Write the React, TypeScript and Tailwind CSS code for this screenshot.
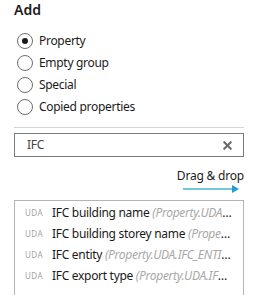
import { X } from "lucide-react";

const font = { fontFamily: '"Segoe UI", "Noto Sans", sans-serif' };

type Item = { name: string; path: string };

const items: Item[] = [
  { name: "IFC building name", path: "Property.UDA.IFC_BUILDING_NAME" },
  { name: "IFC building storey name", path: "Property.UDA.IFC_BUILDING_STOREY" },
  { name: "IFC entity", path: "Property.UDA.IFC_ENTITY" },
  { name: "IFC export type", path: "Property.UDA.IFC_EXPORT_TYPE" },
];

const options = ["Property", "Empty group", "Special", "Copied properties"];

const Radio = ({ checked }: { checked?: boolean }) => (
  <span className="flex h-[16px] w-[16px] shrink-0 items-center justify-center rounded-full border border-[#6f6f6f] bg-white">
    {checked && <span className="h-[6px] w-[6px] rounded-full bg-[#1a1a1a]" />}
  </span>
);

export default function App() {
  return (
    <div className="h-[295px] w-[254px] overflow-hidden bg-white text-[#1a1a1a]" style={font}>
      <div className="ml-[14px] flex w-[230px] flex-col">
        <h2 className="text-[14px] font-semibold leading-[20px]">Add</h2>

        <div className="mt-[10px] flex flex-col">
          {options.map((label, i) => (
            <label key={label} className="flex h-[22px] items-center gap-[6px] pl-[3px] text-[12px] tracking-[-0.3px]">
              <Radio checked={i === 0} />
              <span>{label}</span>
            </label>
          ))}
        </div>

        <div className="mt-[9px] h-px bg-[#d4d4d4]" />

        <div className="mt-[5px] flex h-[24px] items-center justify-between border border-[#7a7a7a] pl-[12px] pr-[9px] text-[12px] tracking-[-0.3px] text-[#444]">
          <span>IFC</span>
          <X className="h-[13px] w-[13px] text-[#6a6a6a]" strokeWidth={4} />
        </div>

        <div className="mt-[11px] flex flex-col items-end">
          <span className="text-[12px] leading-[16px] tracking-[-0.2px]">Drag &amp; drop</span>
          <svg className="mr-[5px] mt-[1px]" width="56" height="8" viewBox="0 0 56 8">
            <line x1="0" y1="4" x2="50" y2="4" stroke="#72c6de" strokeWidth="2" />
            <path d="M49 0 L56 4 L49 8 Z" fill="#1e9fd0" />
          </svg>
        </div>

        <div className="mt-[7px] h-[120px] border border-[#b4b4b4] pl-[10px] pr-[11px] pt-[1px]">
          {items.map((it) => (
            <div key={it.name} className="flex h-[21px] items-center text-[12px] tracking-[-0.3px]">
              <span className="w-[27px] shrink-0 text-[8px] tracking-[0.5px] text-[#a3a3a3]">UDA</span>
              <span className="min-w-0 truncate">
                {it.name} <span className="italic text-[#a8a8a8]">({it.path})</span>
              </span>
            </div>
          ))}
        </div>
      </div>
    </div>
  );
}
